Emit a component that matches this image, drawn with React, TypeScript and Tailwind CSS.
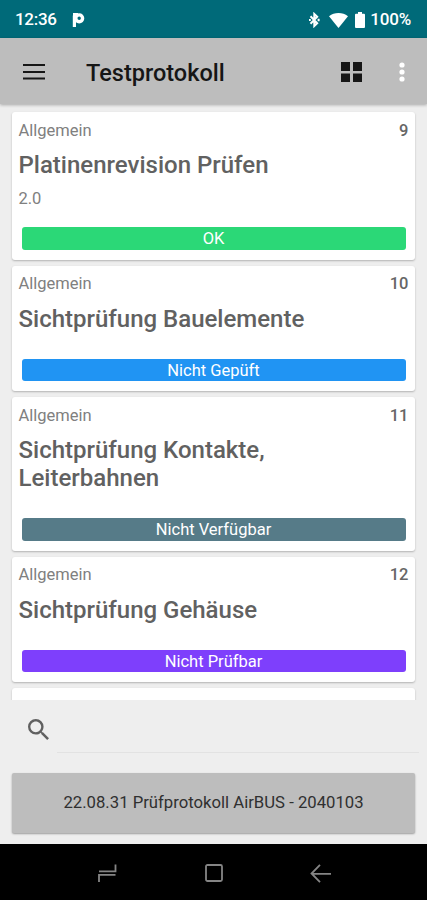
import React from 'react';

interface Check {
  nr: number;
  group: string;
  title: string;
  value?: string;
  status: string;
  color: string;
}

const checks: Check[] = [
  { nr: 9, group: 'Allgemein', title: 'Platinenrevision Prüfen', value: '2.0', status: 'OK', color: 'bg-[#2bd877]' },
  { nr: 10, group: 'Allgemein', title: 'Sichtprüfung Bauelemente', status: 'Nicht Gepüft', color: 'bg-[#2094f3]' },
  { nr: 11, group: 'Allgemein', title: 'Sichtprüfung Kontakte, Leiterbahnen', status: 'Nicht Verfügbar', color: 'bg-[#567b88]' },
  { nr: 12, group: 'Allgemein', title: 'Sichtprüfung Gehäuse', status: 'Nicht Prüfbar', color: 'bg-[#7e3ffc]' },
];

const StatusBar: React.FC = () => (
  <div className="flex h-[38px] shrink-0 items-center bg-[#006a79] pl-[15px] pr-4 pt-0.5 text-white">
    <span className="w-[57px] text-[17px] font-medium tracking-[-0.3px]">12:36</span>
    <svg className="h-[14px] w-[13px]" viewBox="0 0 13 14" fill="none" stroke="currentColor">
      <circle cx="7.200" cy="5.300" r="3.400" strokeWidth="3.400" />
      <path d="M2.400 2.500V14M1 1.600H6" strokeWidth="3.200" />
    </svg>
    <div className="ml-auto flex items-center">
      <svg className="mr-[9px] h-4 w-[11px]" viewBox="0 0 11 16" fill="none" stroke="currentColor" strokeWidth="2">
        <path d="M1.500 4.200 8.200 11.200 5.300 14V2L8.200 4.800 1.500 11.800" />
        <path d="M9.600 6.800v2.400M.8 7v2" />
      </svg>
      <svg className="mr-[7px] h-[15px] w-[19px]" viewBox="0 0 19 15" fill="currentColor">
        <path d="M9.500 15 0 3.200Q4.200 0 9.500 0T19 3.200Z" />
      </svg>
      <svg className="mr-[5px] h-4 w-2.5" viewBox="0 0 10 16" fill="currentColor">
        <path d="M3 0h4v1.700h2q1 0 1 1V15q0 1-1 1H1q-1 0-1-1V2.700q0-1 1-1h2Z" />
      </svg>
      <span className="text-[17px] font-medium tracking-[-0.2px]">100%</span>
    </div>
  </div>
);

const AppBar: React.FC = () => (
  <header className="z-10 flex h-[66px] shrink-0 items-center bg-[#bdbdbd] pl-[23px] pr-[22px] pt-0.5 text-[#161616] shadow-[0_1px_3px_rgba(0,0,0,0.3)]">
    <svg className="h-4 w-[22px]" viewBox="0 0 22 16" fill="currentColor">
      <path d="M0 0h22v2H0zM0 7h22v2H0zM0 13.500h22v2H0z" />
    </svg>
    <h1 className="ml-[41px] pt-px text-[23.500px] font-medium leading-7">Testprotokoll</h1>
    <svg className="ml-auto h-5 w-[21px]" viewBox="0 0 21 20" fill="currentColor">
      <path d="M0 0h9v9H0zM12 0h9v9h-9zM0 11.500h9v8.500H0zM12 11.500h9v8.500h-9z" />
    </svg>
    <svg className="ml-[37px] h-5 w-[6px]" viewBox="0 0 6 20" fill="#fff">
      <circle cx="3" cy="3" r="2.600" />
      <circle cx="3" cy="10" r="2.600" />
      <circle cx="3" cy="17" r="2.600" />
    </svg>
  </header>
);

const CheckCard: React.FC<{ check: Check }> = ({ check }) => (
  <div className="flex shrink-0 flex-col rounded-[3px] bg-white px-[6.500px] pb-2.5 pt-[7.500px] shadow-[0_1px_2px_rgba(0,0,0,0.25)]">
    <div className="flex justify-between text-[16.500px] leading-[22px]">
      <span className="text-[#808080]">{check.group}</span>
      <span className="font-medium text-[#666]">{check.nr}</span>
    </div>
    <h2 className="mt-[9.500px] w-[310px] text-[24px] font-medium leading-7 text-[#616161]">{check.title}</h2>
    <div className="mt-[9px] text-[16.500px] leading-[22px] text-[#808080]">{check.value}</div>
    <div className={`mx-[3px] mt-[17px] h-[22.500px] rounded-[3px] text-center text-[16.500px] leading-[24px] text-white ${check.color}`}>
      {check.status}
    </div>
  </div>
);

const NavBar: React.FC = () => (
  <nav className="flex h-14 shrink-0 items-center justify-between bg-black pl-[98px] pr-[96px] pt-0.5 text-[#858585]">
    <svg className="h-[18px] w-[19px]" viewBox="0 0 19 18" fill="none" stroke="currentColor" strokeWidth="1.800">
      <path d="M1 18V10.900H17.500M17.500 .5V7.300H1" />
    </svg>
    <svg className="h-[18px] w-[18px]" viewBox="0 0 18 18" fill="none" stroke="currentColor" strokeWidth="1.800">
      <rect x="1" y="1" width="16" height="16" rx="1.500" />
    </svg>
    <svg className="h-[19px] w-[21px]" viewBox="0 0 21 19" fill="none" stroke="currentColor" strokeWidth="1.800">
      <path d="M10 .8 1.500 9.500 10 18.200M1.500 9.900H21" />
    </svg>
  </nav>
);

const App: React.FC = () => {
  return (
    <div className="flex h-[900px] w-[427px] flex-col overflow-hidden bg-[#eeeeee] font-[Roboto,sans-serif]">
      <StatusBar />
      <AppBar />

      {/* Scrolling list, the next card is cut off at the bottom */}
      <main className="flex h-[596px] shrink-0 flex-col gap-1.5 overflow-hidden px-3 pt-2">
        {checks.map((check) => (
          <CheckCard key={check.nr} check={check} />
        ))}
        <div className="h-20 shrink-0 rounded-[3px] bg-white shadow-[0_1px_2px_rgba(0,0,0,0.25)]" />
      </main>

      {/* Search */}
      <div className="flex h-[53px] shrink-0 pl-7 pr-2">
        <svg className="mt-[19px] h-[21px] w-[21px] text-[#606060]" viewBox="3 3 17.500 17.500" fill="currentColor">
          <path d="M15.500 14h-.79l-.28-.27A6.471 6.471 0 0 0 16 9.500 6.500 6.500 0 1 0 9.500 16c1.610 0 3.090-.59 4.230-1.570l.27.280v.79l5 4.990L20.490 19l-4.990-5zm-6 0C7.010 14 5 11.990 5 9.500S7.010 5 9.500 5 14 7.010 14 9.500 11.990 14 9.500 14z" />
        </svg>
        <div className="ml-2 flex-1 border-b border-[#e2e2e2]" />
      </div>

      <div className="flex min-h-0 flex-1 px-3 pb-[11px] pt-5">
        <button className="flex-1 rounded-[2px] bg-[#bdbdbd] text-[16.700px] text-[#303030] shadow-[0_1px_2px_rgba(0,0,0,0.35)]">
          22.08.31 Prüfprotokoll AirBUS - 2040103
        </button>
      </div>

      <NavBar />
    </div>
  );
};

export default App;
